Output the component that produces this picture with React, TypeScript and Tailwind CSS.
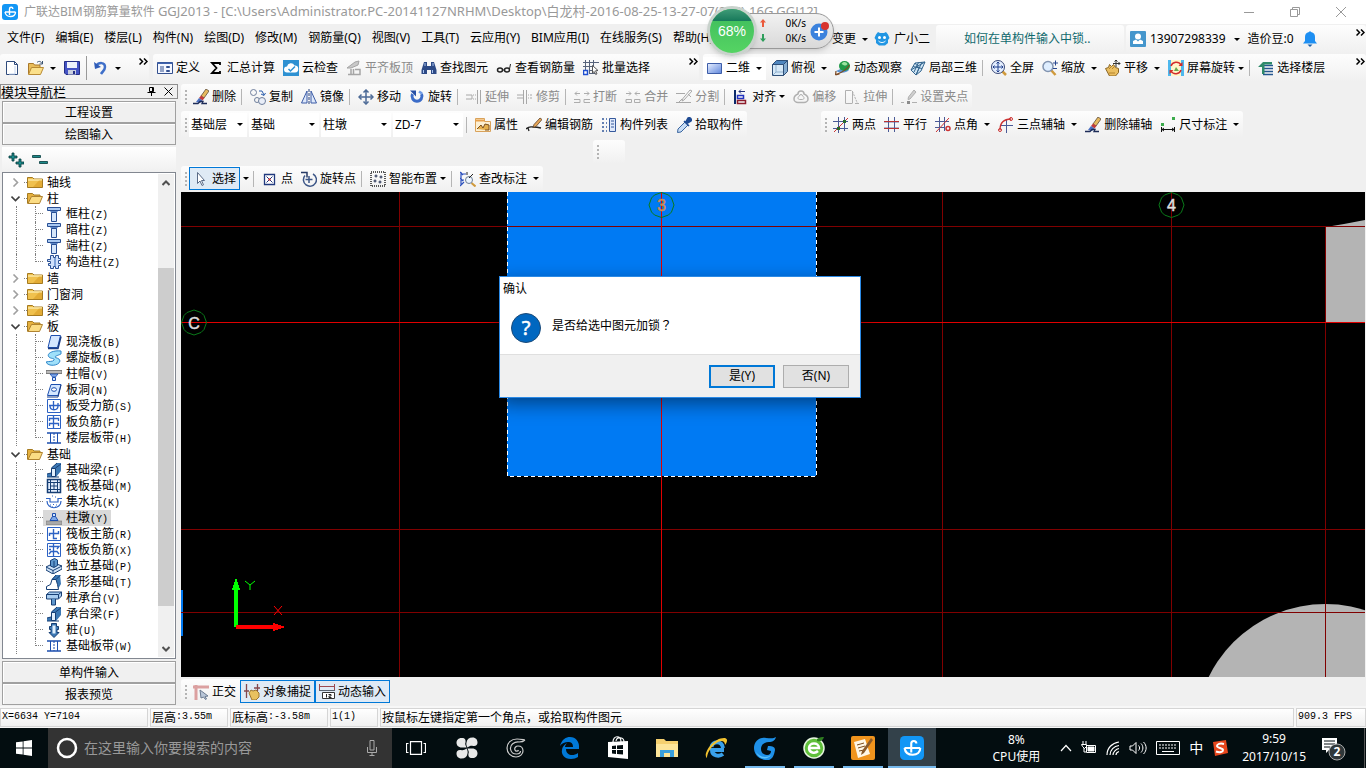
import type { ReactNode } from 'react';
import clsx from 'clsx';

const UI_FONT = "font-['Noto_Sans','Noto_Sans_CJK_SC',sans-serif]";
const MONO = "font-['Liberation_Mono',monospace] text-[10px]";

/* ---------- icon helpers ---------- */

function Svg({ children, className = 'size-4' }: { children: ReactNode; className?: string }) {
  return (
    <svg viewBox="0 0 16 16" fill="none" className={clsx('shrink-0', className)} aria-hidden="true">
      {children}
    </svg>
  );
}

function Arrow() {
  return (
    <svg viewBox="0 0 6 3" className="h-[3px] w-1.5 shrink-0" aria-hidden="true">
      <path d="M0 0h6L3 3z" fill="#000" />
    </svg>
  );
}

function More() {
  return (
    <button aria-label="更多" className="flex h-3.5 w-3 shrink-0 items-center justify-center self-start">
      <svg viewBox="0 0 9 7" className="h-[7px] w-[9px]" fill="none" stroke="#000" strokeWidth="1.5">
        <path d="M.5.5l3 3-3 3M5 .5l3 3-3 3" />
      </svg>
    </button>
  );
}

const icons = {
  page: (
    <Svg>
      <path d="M2.500 1.500h8l3 3v10h-11z" fill="#fff" stroke="#2f4b7c" />
      <path d="M10.500 1.500v3h3" stroke="#2f4b7c" />
      <path d="M11 6v8H5" stroke="#c3d4ee" />
    </Svg>
  ),
  open: (
    <Svg>
      <path d="M.5 14V3.500h5l1 1.500H12v3" fill="#e9bd5a" stroke="#a9782a" />
      <path d="M.5 14.500L3.500 7.500h12l-3 7z" fill="#fbe08a" stroke="#b88a34" />
      <path d="M9 2.500c2-2 4-1 5 1M14.500 1v3h-3" stroke="#38516f" />
    </Svg>
  ),
  save: (
    <Svg>
      <path d="M.5 1.500h15v13H2l-1.500-1.500z" fill="#4453c4" stroke="#252f86" />
      <path d="M3 2h10v6H3z" fill="#eef2fb" />
      <path d="M4 10h8v4.500H4z" fill="#c9cfdf" />
      <path d="M9 11h2v3H9z" fill="#252f86" />
    </Svg>
  ),
  undo: (
    <Svg>
      <path d="M3 6c3-4 9-4 9 1 0 3-2 4-4 7" stroke="#3f6fc9" strokeWidth="2.500" />
      <path d="M1 2l1 7 6-2z" fill="#2f5cb8" />
    </Svg>
  ),
  define: (
    <Svg>
      <path d="M.5 2.500h15v11H.5z" fill="#f4f7ff" stroke="#33508f" />
      <path d="M.5 2.500h15v1.500H.5z" fill="#3e62ad" />
      <path d="M3 7h4M3 9h4M3 11h4" stroke="#33508f" />
      <path d="M9.500 6.500h3v1h-3zM9.500 10.500h3v1h-3z" fill="#c5d3f2" stroke="#33508f" />
    </Svg>
  ),
  sigma: (
    <Svg>
      <path d="M12 5V3H4l4.500 5L4 13h8v-2" stroke="#000" strokeWidth="1.800" />
    </Svg>
  ),
  cloudCheck: (
    <Svg>
      <path d="M0 0h16v16H0z" fill="#2e91d2" />
      <path d="M4 12.500a3 3 0 010-6 4 4 0 017.500-1 3.500 3.500 0 01.5 7z" fill="#fff" />
      <path d="M5.500 9l2 2L12 6.500" stroke="#2e91d2" strokeWidth="1.500" />
    </Svg>
  ),
  level: (
    <Svg>
      <path d="M1 8l8-6 4-1-1 4-7 3z" fill="#c9c9c9" stroke="#a5a5a5" />
      <path d="M5 9v6M7.500 9v6M2 14.500h12v-5H9" stroke="#a5a5a5" strokeWidth="1.500" />
    </Svg>
  ),
  binoculars: (
    <Svg>
      <path d="M3 2h3v4h4V2h3l2.500 8v4H10v-4H6v4H.5v-4z" fill="#2d4a86" />
      <path d="M4 3v3M12 3v3M2.500 10v3M11.500 10v3" stroke="#a9c3ef" />
    </Svg>
  ),
  glasses: (
    <Svg>
      <ellipse cx="4" cy="10" rx="2.500" ry="2" stroke="#222" strokeWidth="1.500" />
      <ellipse cx="11" cy="10" rx="2.500" ry="2" stroke="#222" strokeWidth="1.500" />
      <path d="M6.500 10h2M13.500 9l1-5" stroke="#222" />
    </Svg>
  ),
  batch: (
    <Svg>
      <path d="M2.500 0v10M6.500 0v14M10.500 0v6M0 2.500h16M0 6.500h10M6 10.500h4M6 13.500h8" stroke="#58647c" />
      <path d="M.5 10.500h4v4h-4z" fill="#fff" stroke="#1f4fd0" strokeWidth="1.500" />
      <path d="M9.500 5.500l5.500 5-2.500.3 1.500 3-1.300.7-1.500-3-1.700 1.500z" fill="#fff" stroke="#555" />
    </Svg>
  ),
  rect2d: (
    <Svg>
      <defs>
        <linearGradient id="r2d" x1="0" y1="0" x2="1" y2="1">
          <stop stopColor="#e8f0ff" />
          <stop offset="1" stopColor="#5f86dc" />
        </linearGradient>
      </defs>
      <path d="M.5 3.500h14v10H.5z" fill="url(#r2d)" stroke="#3d5da8" />
    </Svg>
  ),
  cube: (
    <Svg>
      <path d="M.5 4.500h11v11H.5z" fill="#d6e8f7" stroke="#2f4f78" />
      <path d="M.5 4.500l4-4h11l-4 4z" fill="#4f86bf" stroke="#2f4f78" />
      <path d="M11.500 4.500l4-4v11l-4 4z" fill="#86add2" stroke="#2f4f78" />
      <path d="M4 5v7h7M4 12l-3 3" stroke="#8fb0cd" />
    </Svg>
  ),
  orbit: (
    <Svg>
      <path d="M1 11c4-2 7-3 9-5l4 4c-3 3-8 4-13 1z" fill="#5a93d4" />
      <ellipse cx="9.500" cy="6" rx="5.500" ry="5" fill="#1f9a48" />
      <path d="M6.500 4c2-3 5-2 6 0-2 3-4 1-6 0z" fill="#9be3a0" />
      <path d="M.5 15l4-1M.5 15l.5-4M1 14.500C6 13 12 9 14.500 5" stroke="#7c4b25" strokeWidth="1.200" />
    </Svg>
  ),
  local3d: (
    <Svg>
      <path d="M5 3l10-1-4 9-5 4-5-5z" fill="#cfe5f5" stroke="#34658e" />
      <path d="M8.500 2.500L4 12M12 2L6 15M3 6.500l9 2M1 10l5-3 9-5M5 3l4 5-3 7" stroke="#34658e" />
    </Svg>
  ),
  fullView: (
    <Svg>
      <path d="M11 11l4 4" stroke="#d09a3c" strokeWidth="2.500" />
      <circle cx="7" cy="7" r="6.500" fill="#e5efff" stroke="#3b4a78" />
      <path d="M7 2v10M2 7h10M5.500 3.500L7 2l1.500 1.500M5.500 10.500L7 12l1.500-1.500M3.500 5.500L2 7l1.500 1.500M10.500 5.500L12 7l-1.500 1.500" stroke="#1f3e8c" />
    </Svg>
  ),
  zoom: (
    <Svg>
      <path d="M9 10l4.500 5" stroke="#d09a3c" strokeWidth="2.500" />
      <circle cx="6" cy="6.500" r="5" fill="#dfeeff" stroke="#8294b0" strokeWidth="1.500" />
      <path d="M11 3h5M13.500.5v5M11 8.500h4" stroke="#28468f" />
    </Svg>
  ),
  pan: (
    <Svg>
      <path d="M.5 8.500l3-1 1-3 2 2 2-2 2 3 3 1v4l-3 3.500h-6z" fill="#ebbf61" stroke="#8a6524" />
      <path d="M4 9l2-2M7 9l2-2M4 13h6" stroke="#b5842f" />
      <path d="M11 0v7M8 3.500h7M9.500 1.500L11 0l1.500 1.500M13.500 2l1.500 1.500L13.500 5" stroke="#333" />
    </Svg>
  ),
  rotateScreen: (
    <Svg>
      <path d="M0 0h16v16H0z" fill="#4db8ee" />
      <path d="M3 0h10v16H3z" fill="#fff6c9" />
      <path d="M3 6a5.500 5.500 0 0110-1M13 10a5.500 5.500 0 01-10 1" stroke="#d12c2c" strokeWidth="1.500" />
      <path d="M14.500 2v4h-4zM1.500 14v-4h4z" fill="#d12c2c" />
      <path d="M6 11l2-4 3 4z" fill="#6aa84f" />
    </Svg>
  ),
  floors: (
    <Svg>
      <path d="M5 5.500h10M5 8.500h10M5 11.500h10M5 14.500h10" stroke="#24568f" strokeWidth="1.500" />
      <path d="M4 14V7H0l5-5h9v2.500H6.500V14z" fill="#2f8a6a" />
    </Svg>
  ),
  erase: (
    <Svg>
      <path d="M13 0l3 2-5 7-3-2z" fill="#e6b95e" stroke="#5c4a37" strokeWidth=".8" />
      <path d="M8 6.500l3.500 2.500L9.500 11.500 6 9z" fill="#c23b3b" />
      <path d="M6 9l3.500 2.500L7 14l-4-1z" fill="#4a6fc0" />
      <path d="M0 14.500h5l2-2h3l-1 2h5" stroke="#1d2c58" strokeWidth="1.300" />
    </Svg>
  ),
  copy: (
    <Svg>
      <circle cx="3.500" cy="3.500" r="3" stroke="#6f7f9c" />
      <circle cx="7" cy="11" r="2.500" stroke="#6f7f9c" />
      <circle cx="12" cy="12" r="3.500" fill="#e9eef8" stroke="#6f7f9c" />
      <path d="M9 2h3l2 4M11 5l3 1.500L15.500 4" stroke="#2a5cab" />
    </Svg>
  ),
  mirror: (
    <Svg>
      <path d="M6 2v12H.5zM10 2v12h5.500z" fill="#dde8fb" stroke="#3b5ba5" />
      <path d="M8 0v16" stroke="#24417d" strokeDasharray="3 1" />
    </Svg>
  ),
  move: (
    <Svg>
      <path d="M8 1v14M1 8h14" stroke="#4c6a96" strokeWidth="1.500" />
      <path d="M5.500 3.500L8 1l2.500 2.500M5.500 12.500L8 15l2.500-2.500M3.500 5.500L1 8l2.500 2.500M12.500 5.500L15 8l-2.500 2.500" stroke="#4c6a96" strokeWidth="1.500" />
    </Svg>
  ),
  rotate: (
    <Svg>
      <path d="M3.500 5a5 5 0 109 0" stroke="#3c6cc8" strokeWidth="3" />
      <path d="M1 1.500h6v6z" fill="#274fa5" />
      <path d="M10 2.500l3 2" stroke="#6f9be6" strokeWidth="2.500" />
    </Svg>
  ),
  extend: (
    <Svg>
      <path d="M0 6h6v4H0M7 6h1M9 6h1M7 10h1M9 10h1M11.500 1v14M14.500 1v14" stroke="#a8a8a8" />
    </Svg>
  ),
  trim: (
    <Svg>
      <path d="M6.500 1v14M9.500 1v14M0 6h6M0 9h6M11 6h1M13 6h2M11 9h1M13 9h2" stroke="#a8a8a8" />
    </Svg>
  ),
  breakIc: (
    <Svg>
      <path d="M1 4.500h5M3 2.500l-2 2 2 2M10 4.500h5M13 2.500l2 2-2 2M0 10.500h6v3H0M16 10.500h-6v3h6" stroke="#adadad" />
    </Svg>
  ),
  merge: (
    <Svg>
      <path d="M1 4.500h5M4 2.500l2 2-2 2M10 4.500h5M12 2.500l-2 2 2 2M1 10.500h5.500v3H1zM9.500 10.500H15v3H9.500z" stroke="#adadad" />
    </Svg>
  ),
  split: (
    <Svg>
      <path d="M14 1l2 1-8 9-2 1 .5-2zM0 4.500h9M0 13.500h15M3 13l3-3M12 5l3 3" stroke="#a8a8a8" />
    </Svg>
  ),
  align: (
    <Svg>
      <path d="M2 1v14" stroke="#0b2a6b" strokeWidth="2" />
      <path d="M6 2.500h6M8 .5l-2 2 2 2" stroke="#22307c" />
      <path d="M4.500 6.500h6v3h-6z" stroke="#2233c0" strokeWidth="1.500" />
      <path d="M4.500 11.500h8v3h-8z" stroke="#8d1d2c" strokeWidth="1.500" />
    </Svg>
  ),
  offset: (
    <Svg>
      <path d="M5 5a3 3 0 016 0c3 1 4 3 4 5s-2 3.500-4 3.500H5c-2 0-4-1.500-4-3.500s1-4 4-5z" stroke="#b0b0b0" strokeWidth="1.500" />
      <path d="M6.500 7a1.500 1.500 0 013 0c2 .5 2 3.500 0 3.500h-3c-2 0-2-3 0-3.500z" stroke="#b0b0b0" />
    </Svg>
  ),
  stretch: (
    <Svg>
      <path d="M8.500 2.500l5 12" stroke="#b0b0b0" strokeDasharray="2 1" />
      <path d="M7.500 1.500h-6v13h7M8.500 2v12M11 14.500h4" stroke="#b0b0b0" />
    </Svg>
  ),
  grip: (
    <Svg>
      <path d="M13 1l2 2-6 7-2 .5.500-2.500z" fill="#cfcfcf" stroke="#b0b0b0" />
      <path d="M0 13.500h3M11 13.500h5" stroke="#b0b0b0" />
      <path d="M6 12h3v3H6z" fill="#8c8c8c" />
    </Svg>
  ),
  props: (
    <Svg>
      <path d="M.5 1.500h9v3h6v10H.5z" fill="#fdf0d3" stroke="#d9a25a" />
      <path d="M.5 2.500h9v2h-9z" fill="#e8a04a" />
      <path d="M2 12l4-4 2 3 2-4 4 1v5h-4" fill="#e5b04e" stroke="#7a4f1e" />
    </Svg>
  ),
  editBar: (
    <Svg>
      <path d="M0 12c3-3 5-2 7-2s4 0 8 1M2 11l1 3" stroke="#222" strokeWidth="1.300" />
      <path d="M14 1l2 1.500-6 7-3 1 1-3z" fill="#e6a557" stroke="#5b4027" strokeWidth=".8" />
    </Svg>
  ),
  list: (
    <Svg>
      <path d="M1 2h2M1 6h2M1 10h2M1 14h2M5 2h1M5 6h1M5 10h1M5 14h1" stroke="#35599c" strokeWidth="1.500" />
      <path d="M8.500 1.500h6v13h-6z" fill="#dfe9fb" stroke="#35599c" />
      <path d="M10 4h3M10 7h3M10 10h3" stroke="#35599c" />
    </Svg>
  ),
  dropper: (
    <Svg>
      <path d="M9 5l3 3-7 7-3.500.5L2 12z" fill="#c7dcf5" stroke="#3b669f" />
      <path d="M8 4l5 5M10 4.500l2-3.500c2-1 4 1 3 3l-3.500 2z" fill="#1f4b93" stroke="#1f4b93" strokeWidth="1.500" />
    </Svg>
  ),
  cursor: (
    <Svg>
      <path d="M4.500 1.500v11L7 10l2 4.500 1.500-.7-2-4.300h3z" fill="#fff" stroke="#5b6b86" />
    </Svg>
  ),
  point: (
    <Svg>
      <path d="M2.500 3.500h10v10h-10z" fill="#fff" stroke="#20397e" strokeWidth="1.300" />
      <path d="M4.500 5.500l6 6M10.500 5.500l-6 6" stroke="#20397e" />
      <path d="M6.500 7.500h2v2h-2z" fill="#d22" />
    </Svg>
  ),
  rotatePoint: (
    <Svg>
      <path d="M4 4.500A6.500 6.500 0 1012 3" stroke="#3c5687" strokeWidth="1.500" />
      <path d="M0 1.500h6v5" stroke="#263a66" strokeWidth="1.500" />
      <path d="M8 5v7M4.500 8.500h7" stroke="#3c5687" strokeWidth="1.500" />
    </Svg>
  ),
  smart: (
    <Svg>
      <path d="M1 1h14v14H1z" stroke="#222" strokeWidth="1.500" strokeDasharray="1 1" />
      <path d="M6 3.500v3M4.500 5h3M11 4.500v3M9.500 6h3M5 8.500v3M3.500 10h3M10 9.500v3M8.500 11h3" stroke="#1d2a4d" />
    </Svg>
  ),
  check: (
    <Svg>
      <path d="M1 1v13M1 3h5M1 9h3M0 1l3 3M0 7l3 3M0 15l4-4" stroke="#2a4fbd" strokeWidth="1.200" />
      <path d="M11.500 12l4 3.500" stroke="#d09a3c" strokeWidth="2" />
      <circle cx="9" cy="9" r="3.500" fill="#eef6ff" stroke="#6b7d95" />
      <path d="M7 1v3M13 3L9 7" stroke="#222" />
    </Svg>
  ),
  twoPoint: (
    <Svg>
      <path d="M5.500 0v16M11.500 0v14M0 4.500h15M0 11.500h15" stroke="#4a5a96" />
      <path d="M1 15L15 1" stroke="#c33" />
      <path d="M4 10h3v3H4zM10 3h3v3h-3z" fill="#2b6b2b" />
    </Svg>
  ),
  parallel: (
    <Svg>
      <path d="M4.500 0v15M10.500 0v15" stroke="#4a5a96" />
      <path d="M0 4.500h15M0 11.500h15" stroke="#b33" />
      <path d="M0 5.500h15M0 10.500h15" stroke="#4a5a96" opacity=".4" />
    </Svg>
  ),
  angle: (
    <Svg>
      <path d="M4.500 0v15M9.500 0v14M0 4.500h14M0 10.500h10" stroke="#4a5a96" />
      <path d="M1 15L14 1" stroke="#c33" />
      <circle cx="13" cy="11.500" r="2" stroke="#c33" strokeWidth="1.500" />
    </Svg>
  ),
  threePoint: (
    <Svg>
      <path d="M8.500 2v14M2 8.500h13" stroke="#4a5a96" />
      <path d="M2 13C2 6 6 2 13 2" stroke="#c33" strokeWidth="1.300" />
      <circle cx="2" cy="13" r="1.500" stroke="#c33" />
      <circle cx="13" cy="2" r="1.500" stroke="#c33" />
    </Svg>
  ),
  dimension: (
    <Svg>
      <path d="M1 6h3v3H1zM12 0h3v3h-3z" fill="#3cab4c" />
      <path d="M1.500 10v5M14.500 10v5M2 12.500h12M4 11l-2 1.500L4 14M12 11l2 1.500L12 14" stroke="#111" />
    </Svg>
  ),
  ortho: (
    <Svg>
      <path d="M3 16V1M0 3h16" stroke="#dba0a0" strokeWidth="3" />
      <path d="M7 6l8 6-3 .5 1.500 2.500-1 .5-2-2.500L8 14z" fill="#b9c6d8" stroke="#6b7a90" />
    </Svg>
  ),
  snap: (
    <Svg>
      <path d="M2.500 0v14M13.500 0v7M0 7h5M10 4h6" stroke="#84474d" strokeWidth="1.300" />
      <path d="M5 9l2-3 2 1 3-1 3 3v4l-3 3H8z" fill="#e8c160" stroke="#9c7530" />
    </Svg>
  ),
  dynInput: (
    <Svg>
      <path d="M.5 0v7M15.500 0v7M1 2.500h14" stroke="#9c4a50" />
      <path d="M0 6.500h16" stroke="#59626e" />
      <path d="M3.500 8.500h12v6h-12z" fill="#fff" stroke="#333" />
      <path d="M7.500 10v3.500M9.500 10.500H12V12h-2v1.500h2.500" stroke="#222" />
    </Svg>
  ),
  folder: (
    <Svg>
      <path d="M.5 13.500v-10h5l1.500 1.500h8.500v8.500z" fill="#f0c14e" stroke="#a57a20" />
      <path d="M1 6h14" stroke="#fbe7a6" strokeWidth="1.500" />
      <path d="M12 6.500h3V13h-9z" fill="#d89c24" opacity=".6" />
    </Svg>
  ),
  folderOpen: (
    <Svg>
      <path d="M.5 13.500v-10h5l1.500 1.500h6v3" fill="#e5b03e" stroke="#a57a20" />
      <path d="M1 13.500L4.500 6.500h11l-3 7z" fill="#fbdc84" stroke="#b08330" />
    </Svg>
  ),
  column: (
    <Svg>
      <path d="M1.500 1.500h13v3h-13z" fill="#a9c9f2" stroke="#284f94" />
      <path d="M4 5h8l-1.500 2h-5z" fill="#5c86c6" />
      <path d="M5.500 6.500h5v9h-5z" fill="#d5e6fb" stroke="#284f94" />
    </Svg>
  ),
  structColumn: (
    <Svg>
      <path d="M4.500 1.500h3v2h2v-2h3v3h2v2h-2v3h2v2h-2v3h-3v-2h-2v2h-3v-3h-2v-2h2v-2h-3v-2h3z" fill="#cfe0fa" stroke="#284f94" />
      <path d="M9 4v8" stroke="#7fa2da" strokeWidth="2" />
    </Svg>
  ),
  slab: (
    <Svg>
      <path d="M5 1.500h9.500l-3 12H2z" fill="#d3e6ff" stroke="#1d4fae" />
      <path d="M2 14.500h10l3-12" stroke="#1a3c85" strokeWidth="1.500" />
    </Svg>
  ),
  spiral: (
    <Svg>
      <path d="M15 1C6 0 0 4 3 7c2 2 6 1 5 3s-5 1-8 2c2 5 13 4 14-1 0-3-5-3-5-4s4-2 6-3z" fill="#9fe0fa" stroke="#2f86c9" />
    </Svg>
  ),
  capital: (
    <Svg>
      <path d="M0 4.500h16v3H0z" fill="#b9b9b9" stroke="#666" strokeWidth=".8" />
      <path d="M4 8h8l-2.500 3h-3z" fill="#7fa9ea" stroke="#1d4fae" strokeWidth=".8" />
      <path d="M6.500 11.500h3v3h-3z" fill="#d3e6ff" stroke="#1d4fae" />
    </Svg>
  ),
  slabHole: (
    <Svg>
      <path d="M5 2.500h10l-3 11H1.500z" fill="#d3e6ff" stroke="#1d4fae" />
      <ellipse cx="8" cy="7.500" rx="2.500" ry="1.800" fill="#fff" stroke="#1d4fae" />
      <path d="M1 15h11l3-12" stroke="#1a3c85" />
    </Svg>
  ),
  slabBar: (
    <Svg>
      <path d="M1.500 1.500h13v13h-13z" fill="#fff" stroke="#2c62c4" />
      <path d="M3 7.500h11M7.500 3v9M4 8c0 5 8 5 8 0V5" stroke="#2c62c4" strokeWidth="1.300" />
    </Svg>
  ),
  negBar: (
    <Svg>
      <path d="M1.500 1.500h13v13h-13z" fill="#fff" stroke="#2c62c4" />
      <path d="M7.500 2v12M3.500 7V4.500h9V7M3.500 12V9.500h9V12" stroke="#2c62c4" strokeWidth="1.300" />
    </Svg>
  ),
  strip: (
    <Svg>
      <path d="M1 3h14M1 13h14" stroke="#1d4fae" strokeWidth="1.500" />
      <path d="M4.500 3v10M11.500 3v10" stroke="#1d4fae" />
      <path d="M8 3v10" stroke="#1d4fae" strokeDasharray="2 1" />
    </Svg>
  ),
  foundBeam: (
    <Svg>
      <path d="M1 15v-3l4-1V6l6-5h4v8l-5 6z" fill="#3c78b4" />
      <path d="M5.500 6.500h4v8h-4z" fill="#e2f0fd" stroke="#163e74" />
      <path d="M1 15h12M5.500 6L11 1M9.500 6L15 2M1 12l4-1" stroke="#163e74" />
    </Svg>
  ),
  raft: (
    <Svg>
      <path d="M1.500 1.500h13v13h-13z" fill="#e3efff" stroke="#163e74" strokeWidth="1.500" />
      <path d="M4.500 1v14M11.500 1v14M1 4.500h14M1 11.500h14M8 4v8M4 8h8" stroke="#163e74" />
    </Svg>
  ),
  sump: (
    <Svg>
      <path d="M0 4.500h4V8h8V4.500h4M1 7c0 9 14 9 14 0" stroke="#2c62c4" strokeWidth="1.200" />
      <path d="M4 11h1M7 10.500h1M10 11h1M6 13h1M9 13h1M6 2h1M9 3h1" stroke="#2c62c4" />
    </Svg>
  ),
  pier: (
    <Svg>
      <path d="M0 11h16v3.500H0z" fill="#a9a9a9" stroke="#777" strokeWidth=".6" />
      <path d="M4 10.500l2.500-4h3l2.500 4z" fill="#7fa9ea" stroke="#1d4fae" />
      <path d="M6.500 3.500h3v3h-3z" fill="#d3e6ff" stroke="#1d4fae" />
    </Svg>
  ),
  raftMain: (
    <Svg>
      <path d="M1.500 1.500h13v13h-13z" fill="#fff" stroke="#2c62c4" />
      <path d="M3.500 10V7.500h9V5M7.500 3v9.500H11" stroke="#2c62c4" strokeWidth="1.400" />
    </Svg>
  ),
  raftNeg: (
    <Svg>
      <path d="M1.500 1.500h13v13h-13z" fill="#fff" stroke="#2c62c4" />
      <path d="M7.500 2v12M3 4.500h10l-2 2.500M5 7.500H3M3 12l2-2.500h6l2 2.500" stroke="#2c62c4" strokeWidth="1.300" />
    </Svg>
  ),
  isolated: (
    <Svg>
      <path d="M0 9l8-4 8 3v3l-9 5-7-4z" fill="#cfe3f8" stroke="#163e74" />
      <path d="M0 9l7 3.500 9-4.500M7 12.500V16" stroke="#163e74" />
      <path d="M4.500 2.500l4-2 3 1.500v5.500l-3.500 2L4.500 8z" fill="#5d96cc" stroke="#163e74" />
      <path d="M8 3v6" stroke="#163e74" />
    </Svg>
  ),
  stripFound: (
    <Svg>
      <path d="M6 5l4-4h4l1 9-3 5z" fill="#3c78b4" />
      <path d="M.5 15.500v-3l4-2L6 5.500h4l1.500 5 1 5z" fill="#fff" stroke="#163e74" />
      <path d="M6 5.500L10 1M10 5.500L14.500 1" stroke="#163e74" />
    </Svg>
  ),
  pileCap: (
    <Svg>
      <path d="M.5 4.500l3-2.500h12v4l-3 3H.5z" fill="#a9cdf0" stroke="#163e74" />
      <path d="M.5 4.500h12v4M12.500 4.500l3-2.500" stroke="#163e74" />
      <path d="M5.500 9v6h4V9" fill="#5d96cc" stroke="#163e74" />
    </Svg>
  ),
  pile: (
    <Svg>
      <path d="M5.500 1.500h5v3h2v3H11v3h2l-5 5-5-5h2v-3H3.500v-3h2z" fill="#3c78b4" stroke="#163e74" />
      <path d="M6.500 3.500h3v8h-3z" fill="#e2f0fd" />
    </Svg>
  ),
};

type IconName = keyof typeof icons;

function GlodonMark({ className }: { className?: string }) {
  return (
    <Svg className={className}>
      <rect width="16" height="16" rx="3" fill="#1296f5" />
      <path d="M7.500 11V5a1.700 1.700 0 013.400 0M3 8h10.500M13.500 8c0 3-2 4.500-5 4.500S3.500 11 3 8" stroke="#fff" strokeWidth="1.400" />
    </Svg>
  );
}

/* ---------- toolbars ---------- */

function Bar({ children, className, grip = true }: { children?: ReactNode; className?: string; grip?: boolean }) {
  return (
    <div
      role="toolbar"
      className={clsx('flex shrink-0 items-center rounded-[3px] bg-linear-to-b from-[#fdfdfd] to-[#f0f0f0]', className)}
    >
      {grip && <div className="mr-0.5 ml-1 h-3.5 w-0 border-l-2 border-dotted border-[#b4b4b4]" />}
      {children}
    </div>
  );
}

function Sep() {
  return <div className="ml-px mr-1 h-4 w-px shrink-0 bg-[#b5b5b5]" />;
}

interface ToolProps {
  icon: IconName;
  label: string;
  disabled?: boolean;
  arrow?: 'wide' | 'tight';
  active?: boolean;
}

function Tool({ icon, label, disabled, arrow, active }: ToolProps) {
  return (
    <button
      disabled={disabled}
      className={clsx(
        'flex h-[23px] shrink-0 items-center gap-[3px] px-1 whitespace-nowrap',
        disabled && 'text-[#8a8a8a]',
        active && 'bg-[#dfeaf5] outline outline-[#0078d7] -outline-offset-1',
      )}
    >
      {icons[icon]}
      <span>{label}</span>
      {arrow === 'wide' && <span className="w-[9px] pl-[3px]"><Arrow /></span>}
      {arrow === 'tight' && <Arrow />}
    </button>
  );
}

function Combo({ value, className }: { value: string; className: string }) {
  return (
    <div className={clsx('relative mr-0.5 flex h-6 items-center bg-white', className)}>
      <select aria-label={value} className="h-full w-full appearance-none bg-transparent pl-0.5 outline-none">
        <option>{value}</option>
      </select>
      <span className="pointer-events-none absolute right-1 flex">
        <Arrow />
      </span>
    </div>
  );
}

const MENUS = [
  '文件(F)', '编辑(E)', '楼层(L)', '构件(N)', '绘图(D)', '修改(M)', '钢筋量(Q)',
  '视图(V)', '工具(T)', '云应用(Y)', 'BIM应用(I)', '在线服务(S)', '帮助(H)',
];

function TitleBar() {
  return (
    <header className="flex h-6 shrink-0 items-center bg-white pr-0.5 pl-0.5 text-[#999]">
      <GlodonMark className="size-4" />
      <h1 className="ml-1.5 flex-1 truncate font-normal">
        广联达BIM钢筋算量软件{' '}
        <span className="text-[13px]">
          GGJ2013 - [C:\Users\Administrator.PC-20141127NRHM\Desktop\白龙村-2016-08-25-13-27-07(216)-16G.GGJ12]
        </span>
      </h1>
      <div className="flex shrink-0">
        <button aria-label="最小化" className="flex h-6 w-[46px] items-center justify-center">
          <svg viewBox="0 0 10 10" className="size-2.5" stroke="#999"><path d="M0 5.500h10" /></svg>
        </button>
        <button aria-label="还原" className="flex h-6 w-[46px] items-center justify-center">
          <svg viewBox="0 0 10 10" className="size-2.5" fill="none" stroke="#999"><path d="M.5 2.500h7v7h-7zM2.500 2.500v-2h7v7h-2" /></svg>
        </button>
        <button aria-label="关闭" className="flex h-6 w-[46px] items-center justify-center">
          <svg viewBox="0 0 10 10" className="size-2.5" stroke="#999"><path d="M0 0l10 10M10 0L0 10" /></svg>
        </button>
      </div>
    </header>
  );
}

function MenuBar() {
  return (
    <div className="flex h-[30px] shrink-0 items-center">
      <nav className="flex w-[722px] shrink-0 gap-[11px] overflow-hidden pb-0.5 pl-[7px] whitespace-nowrap">
        {MENUS.map((m) => (
          <button key={m}>{m}</button>
        ))}
      </nav>
      <div className="flex w-[214px] shrink-0 items-center justify-end pr-1.5">
        <button className="flex items-center gap-1.5">变更 <Arrow /></button>
        <button className="ml-1.5 flex items-center gap-1">
          <Svg>
            <path d="M2 3.500L4 1l2 1h4l2-1 2 2.500L15.500 7 14 9v3l-3 2.500H5L2 12V9L.5 7z" fill="#2196e3" />
            <circle cx="5.500" cy="6.500" r="1.500" fill="#fff" />
            <circle cx="10.500" cy="6.500" r="1.500" fill="#fff" />
            <path d="M4.500 10c2 2 5 2 7 0" stroke="#fff" />
          </Svg>
          广小二
        </button>
      </div>
      <Bar grip={false} className="h-7 w-[188px] pl-7">
        <a href="#help" className="text-[#10696d]">如何在单构件输入中锁..</a>
      </Bar>
      <Bar grip={false} className="ml-0.5 h-7 min-w-0 flex-1 pl-1">
        <button className="flex items-center gap-1">
          <Svg>
            <rect width="16" height="16" rx="1" fill="#4596cc" />
            <circle cx="8" cy="5.500" r="3" fill="#fff" />
            <path d="M3 13V10l3-1.500 2 2 2-2L13 10v3z" fill="#fff" />
          </Svg>
          <span>13907298339</span>
          <span className="ml-1"><Arrow /></span>
        </button>
        <button className="ml-2 flex items-center gap-2">
          造价豆:0
          <Svg>
            <path d="M8 0l1 1c3 .5 4 2.500 4 5v4l2 2.500H1L3 10V6c0-2.500 1-4.500 4-5z" fill="#1e8ff2" />
            <path d="M5.500 13.500h5L8 16z" fill="#1a5fa8" />
          </Svg>
        </button>
        <div className="flex-1" />
        <More />
      </Bar>
    </div>
  );
}

function MainToolbar() {
  return (
    <div className="flex h-[30px] shrink-0 items-start gap-1">
      <Bar grip={false} className="h-7 w-[149px] pl-1">
        <button aria-label="新建">{icons.page}</button>
        <button aria-label="打开" className="ml-2 flex items-center gap-1.5">{icons.open}<Arrow /></button>
        <button aria-label="保存" className="ml-2">{icons.save}</button>
        <div className="mx-1.5 h-6 w-px bg-[#999]" />
        <button aria-label="撤销" className="flex items-center gap-1.5">{icons.undo}<Arrow /></button>
        <div className="flex-1" />
        <More />
      </Bar>
      <Bar grip={false} className="h-7 w-[546px]">
        <Tool icon="define" label="定义" />
        <Tool icon="sigma" label="汇总计算" />
        <Tool icon="cloudCheck" label="云检查" />
        <Tool icon="level" label="平齐板顶" disabled />
        <Tool icon="binoculars" label="查找图元" />
        <Tool icon="glasses" label="查看钢筋量" />
        <Tool icon="batch" label="批量选择" />
        <div className="flex-1" />
        <More />
      </Bar>
      <Bar grip={false} className="h-7 min-w-0 flex-1">
        <div className="mr-0.5 flex bg-white"><Tool icon="rect2d" label="二维" arrow="wide" /></div>
        <Tool icon="cube" label="俯视" arrow="wide" />
        <Tool icon="orbit" label="动态观察" />
        <Tool icon="local3d" label="局部三维" />
        <Sep />
        <Tool icon="fullView" label="全屏" />
        <Tool icon="zoom" label="缩放" arrow="wide" />
        <Tool icon="pan" label="平移" arrow="wide" />
        <Tool icon="rotateScreen" label="屏幕旋转" arrow="tight" />
        <Sep />
        <Tool icon="floors" label="选择楼层" />
        <div className="flex-1" />
        <More />
      </Bar>
    </div>
  );
}

function DrawToolbars() {
  return (
    <div className="flex shrink-0 flex-col">
      <div className="flex h-[27px] items-start">
        <Bar className="h-[25px]">
          <Tool icon="erase" label="删除" />
          <Sep />
          <Tool icon="copy" label="复制" />
          <Tool icon="mirror" label="镜像" />
          <Sep />
          <Tool icon="move" label="移动" />
          <Tool icon="rotate" label="旋转" />
          <Sep />
          <Tool icon="extend" label="延伸" disabled />
          <Tool icon="trim" label="修剪" disabled />
          <Sep />
          <Tool icon="breakIc" label="打断" disabled />
          <Tool icon="merge" label="合并" disabled />
          <Tool icon="split" label="分割" disabled />
          <Sep />
          <Tool icon="align" label="对齐" arrow="tight" />
          <Tool icon="offset" label="偏移" disabled />
          <Tool icon="stretch" label="拉伸" disabled />
          <Sep />
          <Tool icon="grip" label="设置夹点" disabled />
        </Bar>
      </div>
      <div className="flex h-[29px] items-start">
        <Bar className="h-[27px]">
          <Combo value="基础层" className="w-[58px]" />
          <Combo value="基础" className="w-[70px]" />
          <Combo value="柱墩" className="w-[70px]" />
          <Combo value="ZD-7" className="w-[70px]" />
          <Sep />
          <Tool icon="props" label="属性" />
          <Tool icon="editBar" label="编辑钢筋" />
          <Tool icon="list" label="构件列表" />
          <Tool icon="dropper" label="拾取构件" />
        </Bar>
        <Bar className="ml-[74px] h-[27px]">
          <Tool icon="twoPoint" label="两点" />
          <Tool icon="parallel" label="平行" />
          <Tool icon="angle" label="点角" arrow="wide" />
          <Tool icon="threePoint" label="三点辅轴" arrow="wide" />
          <Tool icon="erase" label="删除辅轴" />
          <Tool icon="dimension" label="尺寸标注" arrow="wide" />
        </Bar>
      </div>
      <div className="flex h-[26px] items-start">
        <Bar className="ml-[412px] h-6 w-8" />
      </div>
      <div className="flex h-[26px] items-start">
        <Bar className="h-[25px]">
          <Tool icon="cursor" label="选择" active />
          <button aria-label="选择方式" className="flex w-3 justify-center"><Arrow /></button>
          <Sep />
          <Tool icon="point" label="点" />
          <Tool icon="rotatePoint" label="旋转点" />
          <Sep />
          <Tool icon="smart" label="智能布置" arrow="tight" />
          <Sep />
          <Tool icon="check" label="查改标注" arrow="wide" />
        </Bar>
      </div>
    </div>
  );
}

/* ---------- module navigator ---------- */

interface Leaf {
  icon: IconName;
  label: string;
  hotkey: string;
}

interface Group {
  label?: string;
  items?: Leaf[];
}

const TREE: Group[] = [
  { label: '轴线' },
  {
    label: '柱',
    items: [
      { icon: 'column', label: '框柱', hotkey: 'Z' },
      { icon: 'column', label: '暗柱', hotkey: 'Z' },
      { icon: 'column', label: '端柱', hotkey: 'Z' },
      { icon: 'structColumn', label: '构造柱', hotkey: 'Z' },
    ],
  },
  { label: '墙' },
  { label: '门窗洞' },
  { label: '梁' },
  {
    label: '板',
    items: [
      { icon: 'slab', label: '现浇板', hotkey: 'B' },
      { icon: 'spiral', label: '螺旋板', hotkey: 'B' },
      { icon: 'capital', label: '柱帽', hotkey: 'V' },
      { icon: 'slabHole', label: '板洞', hotkey: 'N' },
      { icon: 'slabBar', label: '板受力筋', hotkey: 'S' },
      { icon: 'negBar', label: '板负筋', hotkey: 'F' },
      { icon: 'strip', label: '楼层板带', hotkey: 'H' },
    ],
  },
  {
    label: '基础',
    items: [
      { icon: 'foundBeam', label: '基础梁', hotkey: 'F' },
      { icon: 'raft', label: '筏板基础', hotkey: 'M' },
      { icon: 'sump', label: '集水坑', hotkey: 'K' },
      { icon: 'pier', label: '柱墩', hotkey: 'Y' },
      { icon: 'raftMain', label: '筏板主筋', hotkey: 'R' },
      { icon: 'raftNeg', label: '筏板负筋', hotkey: 'X' },
      { icon: 'isolated', label: '独立基础', hotkey: 'P' },
      { icon: 'stripFound', label: '条形基础', hotkey: 'T' },
      { icon: 'pileCap', label: '桩承台', hotkey: 'V' },
      { icon: 'foundBeam', label: '承台梁', hotkey: 'F' },
      { icon: 'pile', label: '桩', hotkey: 'U' },
      { icon: 'strip', label: '基础板带', hotkey: 'W' },
    ],
  },
  {},
];

function TreeLeaf({ leaf, last }: { leaf: Leaf; last: boolean }) {
  const selected = leaf.label === '柱墩';
  return (
    <li className="flex h-4 items-center pl-3">
      <span className="h-4 w-[19px] border-l border-dotted border-[#808080]" />
      <span className={clsx('w-2 border-l border-dotted border-[#808080]', last ? 'h-2 self-start' : 'h-4')}>
        <span className="block h-2 border-b border-dotted border-[#808080]" />
      </span>
      <button className={clsx('flex h-4 items-center gap-1 px-[3px] whitespace-nowrap', selected && 'bg-[#d9d9d9]')}>
        {icons[leaf.icon]}
        <span>
          {leaf.label}
          <span className={MONO}>({leaf.hotkey})</span>
        </span>
      </button>
    </li>
  );
}

function TreeGroup({ group }: { group: Group }) {
  return (
    <li>
      <button className="flex h-4 items-center whitespace-nowrap">
        <svg viewBox="0 0 9 9" className="ml-[7px] size-[9px]" fill="none" strokeWidth="1.600">
          {group.items ? <path d="M.5 2.500l4 4 4-4" stroke="#404040" /> : <path d="M2.500.5l4 4-4 4" stroke="#a0a0a0" />}
        </svg>
        <span className="ml-1 w-[3px] border-t border-dotted border-[#808080]" />
        {group.items ? icons.folderOpen : icons.folder}
        {group.label && <span className="ml-1">{group.label}</span>}
      </button>
      {group.items && (
        <ul>
          {group.items.map((leaf, i) => (
            <TreeLeaf key={leaf.label} leaf={leaf} last={i === group.items!.length - 1} />
          ))}
        </ul>
      )}
    </li>
  );
}

function PanelButton({ children }: { children: ReactNode }) {
  return (
    <button className="h-[22px] w-full shrink-0 border border-[#a0a0a0] bg-[#f0f0f0] shadow-[inset_1px_1px_0_#fff]">
      {children}
    </button>
  );
}

function Navigator() {
  return (
    <aside className="flex w-[178px] shrink-0 flex-col font-['Noto_Sans_CJK_SC',sans-serif]">
      <div className="flex h-[15px] items-center border border-[#8f8f8f] pr-1">
        <h2 className="flex-1 text-[13px] leading-[13px] font-normal">模块导航栏</h2>
        <button aria-label="固定" className="mr-2">
          <svg viewBox="0 0 9 9" className="size-[9px]" fill="none" stroke="#000">
            <path d="M2.500.5h4v4h-4zM5.500.5v4M.5 5.500h8M4.500 5.500V9" />
          </svg>
        </button>
        <button aria-label="关闭面板">
          <svg viewBox="0 0 9 9" className="size-[9px]" stroke="#000"><path d="M.5.5l8 8M8.500.5l-8 8" /></svg>
        </button>
      </div>
      <div className="mx-0.5 mt-0.5 flex min-h-0 flex-1 flex-col pb-px">
        <PanelButton>工程设置</PanelButton>
        <PanelButton>绘图输入</PanelButton>
        <div className="mt-0.5 flex h-[25px] shrink-0 items-center gap-2 bg-linear-to-b from-white to-[#f0f0f0] pl-1.5">
          <button aria-label="全部展开">
            <Svg>
              <path d="M4 1h2v3h3v2H6v3H4V6H1V4h3z" fill="#1c8a8a" stroke="#03383a" strokeWidth=".8" />
              <path d="M11 7h2v3h3v2h-3v3h-2v-3H8v-2h3z" fill="#1c8a8a" stroke="#03383a" strokeWidth=".8" />
            </Svg>
          </button>
          <button aria-label="全部折叠">
            <Svg>
              <path d="M.5 3.500h8v2h-8zM7.500 9.500h8v2h-8z" fill="#1c8a8a" stroke="#03383a" strokeWidth=".8" />
            </Svg>
          </button>
        </div>
        <div className="flex min-h-0 flex-1 border border-[#828790] bg-white p-px">
          <ul className="min-w-0 flex-1 overflow-hidden">
            {TREE.map((g, i) => (
              <TreeGroup key={i} group={g} />
            ))}
          </ul>
          <div className="flex w-4 flex-col items-center bg-[#f0f0f0]">
            <button aria-label="向上滚动" className="flex h-[17px] items-center">
              <svg viewBox="0 0 8 6" className="h-1.5 w-2" fill="none" stroke="#505050" strokeWidth="2"><path d="M.5 5L4 1.500 7.500 5" /></svg>
            </button>
            <div className="h-[16%]" />
            <div className="w-4 flex-1 bg-[#cdcdcd]" />
            <div className="h-[7%]" />
            <button aria-label="向下滚动" className="flex h-[17px] items-center">
              <svg viewBox="0 0 8 6" className="h-1.5 w-2" fill="none" stroke="#505050" strokeWidth="2"><path d="M.5 1L4 4.500 7.500 1" /></svg>
            </button>
          </div>
        </div>
        <div className="h-0.5 shrink-0" />
        <PanelButton>单构件输入</PanelButton>
        <PanelButton>报表预览</PanelButton>
      </div>
    </aside>
  );
}

/* ---------- drawing area ---------- */

function AxisBubble({ x, y, text, color }: { x: number; y: number; text: string; color: string }) {
  return (
    <g>
      <path
        d="M-12.500 0L-10-7-7-10 0-12.500 7-10 10-7 12.500 0 10 7 7 10 0 12.500-7 10-10 7z"
        transform={`translate(${x} ${y})`}
        fill="none"
        stroke="#0a7a1a"
      />
      <text x={x} y={y + 6} textAnchor="middle" fontSize="16" fill={color} stroke={color} strokeWidth=".5" fontFamily="'Liberation Sans', sans-serif">
        {text}
      </text>
    </g>
  );
}

function Drawing() {
  return (
    <svg
      viewBox="0 0 1184 485"
      preserveAspectRatio="xMinYMin slice"
      className="mr-px min-h-0 flex-1 bg-black"
      role="img"
      aria-label="绘图区"
    >
      <path d="M326 0h309v284H326z" fill="#007af3" />
      <path d="M326.500 0v284.500h309V0" fill="none" stroke="#fff" strokeDasharray="4 3" />
      <path d="M1145 35l18-3 21-4v102h-39z" fill="#b4b4b4" />
      <circle cx="1144.500" cy="542" r="130" fill="#b4b4b4" />
      <path d="M0 398h2v46H0z" fill="#0078f0" />
      <g stroke="#800000" shapeRendering="crispEdges">
        <path d="M218.500 0v485M761.500 0v485M990.500 0v485M1144.500 34v451" />
        <path d="M0 34.500h1184M0 337.500h1184M0 420.500h1184" />
      </g>
      <path d="M480.500 0v485M0 130.500h1184" stroke="#e00000" shapeRendering="crispEdges" />
      <AxisBubble x={480.5} y={13} text="3" color="#c98a50" />
      <AxisBubble x={990.5} y={13} text="4" color="#ddd" />
      <AxisBubble x={13} y={130.5} text="C" color="#ddd" />
      <g shapeRendering="crispEdges">
        <path d="M55 435v-45" stroke="#0f0" strokeWidth="4" />
        <path d="M51 398l4-13 4 13z" fill="#0f0" />
        <path d="M55 435h40" stroke="#f00" strokeWidth="4" />
        <path d="M92 431l13 4-13 4z" fill="#f00" />
      </g>
      <path d="M64 389l5 4 5-4M69 393v5" stroke="#0f0" fill="none" />
      <path d="M93 414l8 9M101 414l-8 9" stroke="#f00" fill="none" />
    </svg>
  );
}

function SnapBar() {
  return (
    <div className="flex h-[29px] shrink-0 items-center">
      <Bar className="h-[25px]">
        <Tool icon="ortho" label="正交" />
        <Tool icon="snap" label="对象捕捉" active />
        <Tool icon="dynInput" label="动态输入" active />
      </Bar>
    </div>
  );
}

function Pane({ children, className }: { children: ReactNode; className?: string }) {
  return (
    <div className={clsx('flex h-[19px] shrink-0 items-center border border-[#d5d5d5] bg-linear-to-b from-white to-[#f0f0f0] pl-px whitespace-pre', className)}>
      {children}
    </div>
  );
}

function StatusBar() {
  return (
    <footer className="flex h-[22px] shrink-0 items-center gap-0.5 bg-[#f7f7f7] font-['Noto_Sans_CJK_SC',sans-serif]">
      <Pane className="w-[148px]"><span className={MONO}>X=6634 Y=7104</span></Pane>
      <Pane className="w-[78px]">层高<span className={MONO}>:3.55m</span></Pane>
      <Pane className="w-[98px]">底标高<span className={MONO}>:-3.58m</span></Pane>
      <Pane className="w-12"><span className={MONO}>1(1)</span></Pane>
      <Pane className="min-w-0 flex-1">按鼠标左键指定第一个角点，或拾取构件图元</Pane>
      <Pane className="w-[70px]"><span className={MONO}>909.3 FPS</span></Pane>
    </footer>
  );
}

/* ---------- overlays ---------- */

function ConfirmDialog() {
  return (
    <div
      role="dialog"
      aria-label="确认"
      className="absolute top-[276px] left-[499px] w-[362px] border border-[#2b8ae6] bg-white shadow-[0_6px_18px_rgba(0,0,0,0.45)]"
    >
      <h2 className="flex h-6 items-center pl-[3px] font-normal">确认</h2>
      <div className="flex h-[53px] items-center gap-[11px] pl-[11px]">
        <svg viewBox="0 0 30 30" className="size-[30px] overflow-visible">
          <circle cx="15" cy="15" r="14.500" fill="#0067c0" stroke="#1b4a78" />
          <text x="15" y="22" textAnchor="middle" fontSize="20" fill="#fff" stroke="#fff" strokeWidth=".5" fontFamily="'Noto Sans', sans-serif">?</text>
        </svg>
        <p className="pb-1">
          是否给选中图元加锁<span className="font-['Noto_Sans_CJK_TC',sans-serif]" lang="zh-TW">？</span>
        </p>
      </div>
      <div className="flex h-[43px] items-center justify-end gap-2 border-t border-[#dfdfdf] bg-[#f0f0f0] pr-[11px]">
        <button className="h-[23px] w-[66px] border-2 border-[#0078d7] bg-[#e1e1e1]">是(Y)</button>
        <button className="h-[23px] w-[66px] border border-[#adadad] bg-[#e1e1e1]">否(N)</button>
      </div>
    </div>
  );
}

function SpeedBall() {
  return (
    <div className="absolute top-1.5 left-[707px] flex h-[50px] w-[127px] items-center">
      <div className="absolute inset-y-[7px] right-0 left-6 rounded-full border border-[#999] bg-linear-to-b from-[#f1f1f1] to-[#d9d9d9] shadow-md" />
      <div className="relative flex size-[50px] shrink-0 items-center justify-center overflow-hidden rounded-full border-[3px] border-[#c9d2cc] bg-linear-to-b from-[#3dbb5c] to-[#55d463] shadow-md">
        <div className="absolute inset-x-0 top-0 h-3 bg-linear-to-b from-[#3f9c78] to-[#15795a]" />
        <span className="relative font-['Liberation_Sans',sans-serif] text-sm text-white">68%</span>
      </div>
      <div className="relative ml-0.5 flex flex-col gap-1">
        <svg viewBox="0 0 8 10" className="h-2.5 w-2"><path d="M4 0l3 3.500H5V8H3V3.500H1z" fill="#ea5a3c" /></svg>
        <svg viewBox="0 0 8 10" className="h-2.5 w-2"><path d="M4 9l3-3.500H5V1H3v4.500H1z" fill="#2e9e5b" /></svg>
      </div>
      <div className="relative ml-auto flex flex-col pr-1 text-right text-[10px] leading-[15px]">
        <span>0K/s</span>
        <span>0K/s</span>
      </div>
      <svg viewBox="0 0 20 20" className="relative mr-1 size-5">
        <circle cx="9" cy="11" r="8.500" fill="#3b82dd" />
        <path d="M9 6.500v9M4.500 11h9" stroke="#fff" strokeWidth="2" />
        <circle cx="15" cy="5" r="4" fill="#d8322c" />
      </svg>
    </div>
  );
}

/* ---------- windows taskbar ---------- */

function Task({ children, label, state }: { children: ReactNode; label: string; state?: 'open' | 'active' }) {
  return (
    <button
      aria-label={label}
      className={clsx('relative flex h-full w-12 shrink-0 items-center justify-center', state === 'active' && 'bg-[#33414a]')}
    >
      {children}
      {state && (
        <span className={clsx('absolute bottom-0 h-0.5 bg-[#76b9ed]', state === 'active' ? 'inset-x-0' : 'inset-x-1')} />
      )}
    </button>
  );
}

function Taskbar() {
  return (
    <div className="flex h-10 shrink-0 items-center bg-[#030d10] text-white">
      <Task label="开始">
        <Svg>
          <path d="M0 2.300L6.700 1.400v6.200H0zM7.500 1.300L16 0v7.600H7.500zM0 8.400h6.700v6.200L0 13.700zM7.500 8.400H16V16l-8.500-1.300z" fill="#fff" />
        </Svg>
      </Task>
      <div className="flex h-full w-[344px] shrink-0 items-center bg-[#333] pr-3.5 pl-2">
        <svg viewBox="0 0 22 22" className="size-[22px] shrink-0" fill="none">
          <circle cx="11" cy="11" r="9" stroke="#fff" strokeWidth="2.500" />
        </svg>
        <input
          aria-label="搜索"
          placeholder="在这里输入你要搜索的内容"
          className="ml-1.5 min-w-0 flex-1 bg-transparent text-sm outline-none placeholder:text-[#999]"
        />
        <svg viewBox="0 0 12 16" className="h-4 w-3" fill="none" stroke="#aaa">
          <path d="M4 .5h4v9.500H4zM1.500 7v5.500h9V7M6 12.500v3M3.500 15.500h5" />
        </svg>
      </div>
      <div className="flex h-full">
        <Task label="任务视图">
          <svg viewBox="0 0 20 14" className="h-3.5 w-5" fill="none" stroke="#fff" strokeWidth="1.200">
            <path d="M4.500.7h11v12.600h-11zM2.500 2.500h-2v9h2M17.500 2.500h2v9h-2" />
          </svg>
        </Task>
      </div>
      <div className="ml-[3px] flex h-full gap-px">
        <Task label="四叶">
          <svg viewBox="0 0 22 22" className="size-[22px]" fill="#e8e8e8">
            <path d="M10.500 10.500H6C2 10.500.5 8 .5 5.500S3 .5 6 1c3 0 4 2 3.500 4.500-1 2 .5 3 1 5zM11.500 10.500c-1-2-1.500-3-1-5C11 2 13 .5 16.500.5 20 .5 21.500 3 21.500 5.500S20 9.500 17 9c-2-.5-3.500 0-5.500 1.500zM11.500 11.500H16c4 0 5.500 2.500 5.500 5s-2.500 5-5.500 4.500c-3 0-4-2-3.500-4.500 1-2-.5-3-1-5zM10.500 11.500c1 2 1.500 3 1 5-.5 3.500-2.500 5-6 5-3.500 0-5-2.500-5-5S2 12.500 5 13c2 .5 3.500 0 5.500-1.500z" />
          </svg>
        </Task>
        <Task label="旋风">
          <svg viewBox="0 0 20 20" className="size-5" fill="none" stroke="#ccc" strokeWidth="1.200">
            <path d="M19 2c-3-.5-5-1-8-1C5 1 1 5 1 10c0 5 4 9 9 9 4 0 7-3 7-6s-2-5-5-5c-2 0-4 2-3 4 .5 1.500 3 1.500 3.500 0M19 2c-2 2-4 2-6 2-5-.500-9 3-8.500 7 .5 3 3 5 6 5 2 0 4-1 4-3" />
          </svg>
        </Task>
      </div>
      <div className="ml-[5px] flex h-full gap-px">
        <Task label="Edge">
          <svg viewBox="0 0 20 22" className="h-[22px] w-5">
            <path d="M1 9C3 2 7 0 11 0c6 0 9 5 9 9v3H7c0 4 3 6 6 6 2 0 4-.5 6-2v4c-2 1-4 2-7 2-7 0-10-5-9-9 0-3 2-5 5-7-1 1-2 3-2 4h8c0-4-2-5-5-5S3 6 1 9z" fill="#0078d7" />
          </svg>
        </Task>
        <Task label="应用商店">
          <svg viewBox="0 0 22 24" className="h-6 w-[22px]">
            <path d="M6 6c0-7 8-7 8 0M9 5c1-5 8-4 8 1" stroke="#fff" fill="none" strokeWidth="1.200" />
            <path d="M1 6l20-1v18l-20-2z" fill="#fff" />
            <path d="M5 10l4-.5V13H5zM10 9.500l6-.5v4h-6zM5 14h4v4l-4-.5zM10 14h6v4.500l-6-.5z" fill="#030d10" />
          </svg>
        </Task>
        <Task label="文件资源管理器">
          <svg viewBox="0 0 22 20" className="h-5 w-[22px]">
            <path d="M0 1h8l2 2h12v16H0z" fill="#f5d06f" />
            <path d="M0 6h22v13H0z" fill="#fde599" />
            <path d="M4 19v-7h14v7h-4v-4H8v4z" fill="#3a9fdc" />
          </svg>
        </Task>
        <Task label="Internet Explorer">
          <svg viewBox="0 0 24 24" className="size-6" fill="none">
            <path d="M20 14H8c0 6 7 7 11 4M7.500 11C8 5 18 4 19 12" stroke="#3aa0ea" strokeWidth="4" />
            <path d="M3 22c-5-3 6-21 18-20 4 1 1 6 0 7 0-5-5-5-10-1C6 12 3 18 3 22z" fill="#f2c230" />
          </svg>
        </Task>
        <Task label="浏览器" state="open">
          <svg viewBox="0 0 24 24" className="size-6">
            <path d="M23 1c-1 4-4 5-7 5-5 0-8 3-8 7s3 6 6 6 4-2 4-4l-4-1 1-4c5 0 7 1 7 4-1 6-3 9-6 10C6 25 1 18 1 12S6 1 13 2c4 0 7 1 10-1z" fill="#1e90e8" />
            <path d="M3 16c3 8 12 8 15 3-4 3-11 3-15-3z" fill="#5cc3fb" />
          </svg>
        </Task>
        <Task label="安全浏览器" state="open">
          <svg viewBox="0 0 24 24" className="size-6" fill="none">
            <circle cx="12" cy="12" r="10" fill="#5fbf3a" stroke="#e7f5df" strokeWidth="1.500" />
            <path d="M7 12h10c0-6-10-6-10 0 0 5 6 6 9 3" stroke="#fff" strokeWidth="2.500" />
            <path d="M15 3c3-2 5-2 7-2-1 3-3 5-7 4z" fill="#2e7c20" />
          </svg>
        </Task>
        <Task label="记事" state="open">
          <svg viewBox="0 0 24 24" className="size-6">
            <rect width="24" height="24" rx="2" fill="#f0941d" />
            <path d="M3 6l11-3 5 15-12 4z" fill="#fff7e6" />
            <path d="M6 9l7-2M7 12l7-2M8 15l5-1" stroke="#7a4a1a" />
            <path d="M20 2l2 2-9 13-3 2 1-4z" fill="#8a5a2a" />
          </svg>
        </Task>
        <Task label="广联达钢筋算量" state="active">
          <GlodonMark className="size-6" />
        </Task>
      </div>
      <div className="ml-auto flex h-full shrink-0 items-center">
        <div className="mr-5 text-center leading-[17px]">
          8%
          <br />
          CPU使用
        </div>
        <div className="flex items-center gap-[9px]">
          <svg viewBox="0 0 12 8" className="h-2 w-3" fill="none" stroke="#fff" strokeWidth="1.200"><path d="M1 7l5-5.500L11 7" /></svg>
          <svg viewBox="0 0 16 14" className="h-3.5 w-4" fill="none" stroke="#fff">
            <path d="M5.500 4.500h9v7h-9zM2 0v3M5 0v3M.5 3.500h5v2l-2 2-2-2zM3 7v4h2" />
            <path d="M7 6h6v4H7z" fill="#fff" />
          </svg>
          <svg viewBox="0 0 14 14" className="size-3.5" fill="none" stroke="#fff" strokeWidth="1.200">
            <path d="M1 14C1 7 6 2 13 1M4 14c0-5 4-9 9-9.500M7 14c0-3 3-6 6-6.500M10 14c0-2 1.500-3 3-3.500" />
          </svg>
          <svg viewBox="0 0 18 14" className="h-3.5 w-[18px]" fill="none" stroke="#fff">
            <path d="M1 5h2.500L7 1.500v11L3.500 9H1zM9.500 4.500c1.500 1.500 1.500 3.500 0 5M12 2.500c2.500 2.500 2.500 6.500 0 9M14.500 1c3.500 3.500 3.500 8.500 0 12" />
          </svg>
          <svg viewBox="0 0 24 14" className="h-3.5 w-6" fill="none" stroke="#fff">
            <path d="M.5.500h23v13H.5z" />
            <path d="M3 4h18M3 7h18" strokeDasharray="2 1" />
            <path d="M6 10.500h12" />
          </svg>
          <span className="text-sm">中</span>
          <svg viewBox="0 0 16 16" className="size-4" fill="none">
            <path d="M1 2l13-2 2 13-13 3z" fill="#e8471d" />
            <path d="M12 4C8 3 5 4 5 6s6 2 6 4-3 3-7 1.500" stroke="#fff" strokeWidth="2" />
          </svg>
        </div>
        <div className="ml-3.5 text-center leading-[18px]">
          9:59
          <br />
          2017/10/15
        </div>
        <button aria-label="通知" className="ml-3.5 flex w-11 items-center">
          <svg viewBox="0 0 26 26" className="size-[26px]">
            <path d="M2 3h15v12H9l-3 3v-3H2z" fill="#fff" />
            <path d="M4 6h11M4 9h11M4 12h6" stroke="#030d10" />
            <circle cx="17" cy="17" r="8" fill="#30383a" stroke="#aaa" />
            <text x="17" y="21" textAnchor="middle" fontSize="12" fontWeight="700" fill="#fff" fontFamily="'Noto Sans', sans-serif">2</text>
          </svg>
        </button>
        <div className="mr-px h-full w-px bg-[#555]" />
      </div>
    </div>
  );
}

export default function App() {
  return (
    <div className={clsx('relative flex h-screen flex-col overflow-hidden bg-[#f0f0f0] text-xs text-black', UI_FONT)}>
      <TitleBar />
      <MenuBar />
      <MainToolbar />
      <div className="flex min-h-0 flex-1">
        <Navigator />
        <main className="ml-[3px] flex min-w-0 flex-1 flex-col">
          <DrawToolbars />
          <Drawing />
          <SnapBar />
        </main>
      </div>
      <StatusBar />
      <Taskbar />
      <ConfirmDialog />
      <SpeedBall />
    </div>
  );
}
